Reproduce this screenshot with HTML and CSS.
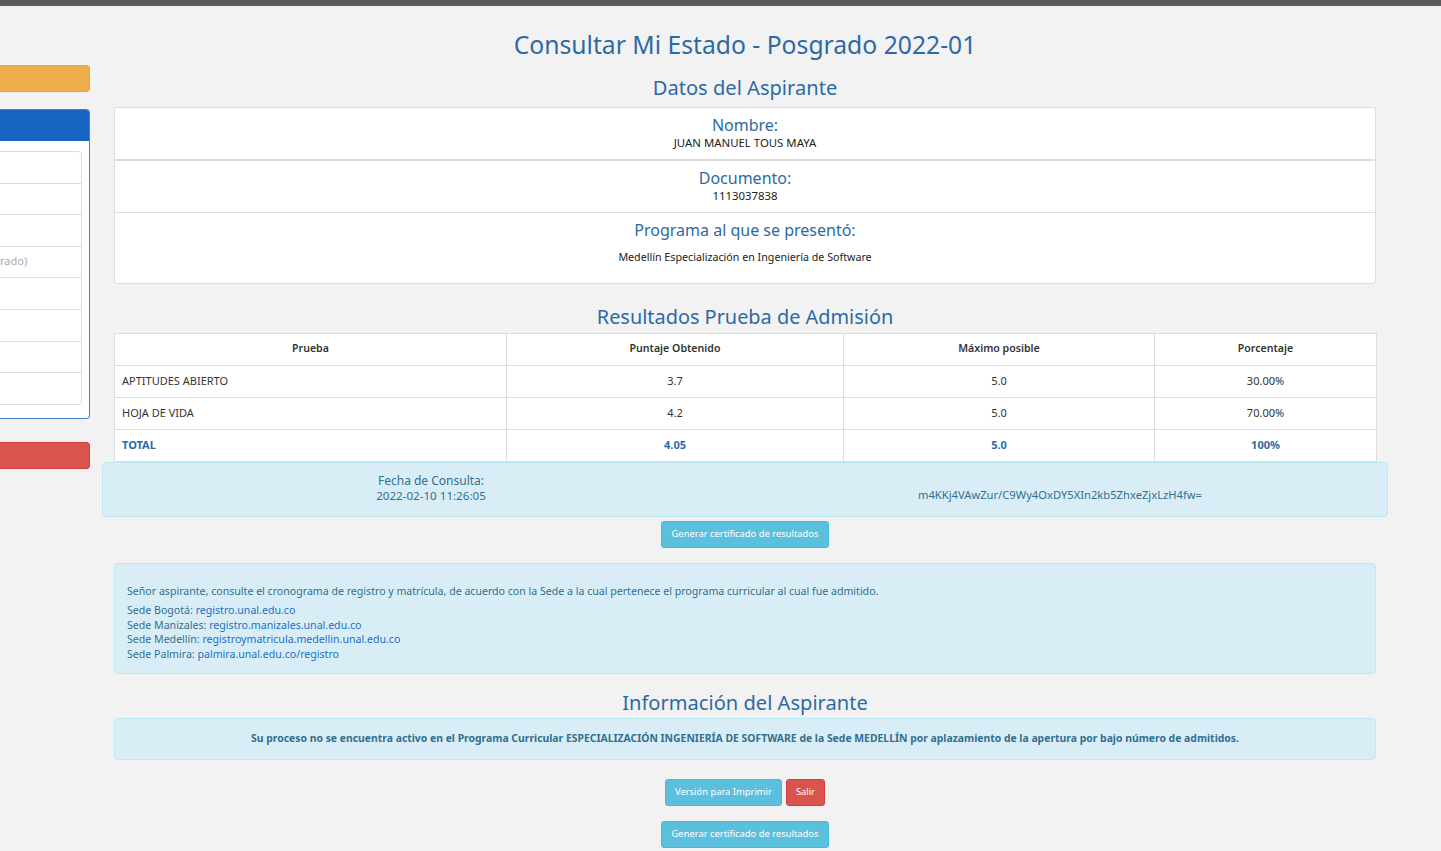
FILE: index.html
```html
<!DOCTYPE html>
<html lang="es">
<head>
<meta charset="utf-8">
<title>Consultar Mi Estado - Posgrado 2022-01</title>
<link rel="stylesheet" href="styles.css">
</head>
<body>
<div class="topbar"></div>
<div class="page">
  <aside class="sidebar">
    <div class="btn-side orange"></div>
    <div class="side-panel">
      <div class="side-head"></div>
      <div class="side-body">
        <ul class="side-list">
          <li></li><li></li><li></li><li class="muted">rado)</li><li></li><li></li><li></li><li></li>
        </ul>
      </div>
    </div>
    <div class="btn-side red"></div>
  </aside>
  <main class="main">
    <h1 class="title">Consultar Mi Estado - Posgrado 2022-01</h1>
    <h2 class="section">Datos del Aspirante</h2>
    <div class="card">
      <div class="card-row first">
        <div class="label">Nombre:</div>
        <div class="value">JUAN MANUEL TOUS MAYA</div>
      </div>
      <div class="card-row">
        <div class="label">Documento:</div>
        <div class="value">1113037838</div>
      </div>
      <div class="card-row prog">
        <div class="label">Programa al que se presentó:</div>
        <div class="value">Medellín Especialización en Ingeniería de Software</div>
      </div>
    </div>

    <h2 class="section results">Resultados Prueba de Admisión</h2>
    <table class="results-table">
      <colgroup><col class="c1"><col class="c2"><col class="c3"><col class="c4"></colgroup>
      <thead>
        <tr><th>Prueba</th><th>Puntaje Obtenido</th><th>Máximo posible</th><th>Porcentaje</th></tr>
      </thead>
      <tbody>
        <tr><td>APTITUDES ABIERTO</td><td>3.7</td><td>5.0</td><td>30.00%</td></tr>
        <tr><td>HOJA DE VIDA</td><td>4.2</td><td>5.0</td><td>70.00%</td></tr>
        <tr class="total"><td>TOTAL</td><td>4.05</td><td>5.0</td><td>100%</td></tr>
      </tbody>
    </table>

    <div class="alert fecha">
      <div class="fecha-col">
        <div class="fecha-label">Fecha de Consulta:</div>
        <div class="fecha-date">2022-02-10 11:26:05</div>
      </div>
      <div class="fecha-col hash">m4KKj4VAwZur/C9Wy4OxDY5XIn2kb5ZhxeZjxLzH4fw=</div>
    </div>
    <div class="btn-row"><a class="btn info">Generar certificado de resultados</a></div>

    <div class="alert sedes">
      <p class="intro">Señor aspirante, consulte el cronograma de registro y matrícula, de acuerdo con la Sede a la cual pertenece el programa curricular al cual fue admitido.</p>
      <p class="links">Sede Bogotá: <a>registro.unal.edu.co</a><br>
      Sede Manizales: <a>registro.manizales.unal.edu.co</a><br>
      Sede Medellín: <a>registroymatricula.medellin.unal.edu.co</a><br>
      Sede Palmira: <a>palmira.unal.edu.co/registro</a></p>
    </div>

    <h2 class="section info-title">Información del Aspirante</h2>
    <div class="alert estado">Su proceso no se encuentra activo en el Programa Curricular ESPECIALIZACIÓN INGENIERÍA DE SOFTWARE de la Sede MEDELLÍN por aplazamiento de la apertura por bajo número de admitidos.</div>

    <div class="btn-row actions"><a class="btn info">Versión para Imprimir</a><a class="btn danger">Salir</a></div>
    <div class="btn-row last"><a class="btn info">Generar certificado de resultados</a></div>
  </main>
</div>
</body>
</html>
```
FILE: styles.css
```css
* { box-sizing: border-box; }
html, body { margin: 0; padding: 0; }
body {
  background: #f2f2f2;
  font-family: "Noto Sans", "Open Sans", sans-serif;
  font-stretch: semi-condensed;
  color: #333;
  height: 851px;
  overflow: hidden;
}
.topbar { height: 6px; background: #5b5b5b; }
.page { display: flex; gap: 12px; }

.sidebar { width: 90px; flex: none; padding-top: 59px; }
.btn-side { height: 27px; border-radius: 0 4px 4px 0; }
.btn-side.orange { background: #f0ad4e; border: 1px solid #eea236; border-left: 0; }
.btn-side.red { background: #d9534f; border: 1px solid #d43f3a; border-left: 0; margin-top: 23px; }
.side-panel { margin-top: 17px; border: 1px solid #3b82cf; border-left: 0; border-radius: 0 4px 4px 0; background: #fff; height: 310px; overflow: hidden; }
.side-head { height: 31px; background: #1565c0; }
.side-body { padding: 10px 7px 0 0; }
.side-list { list-style: none; margin: 0; padding: 0; border: 1px solid #ddd; border-left: 0; border-radius: 0 4px 4px 0; }
.side-list li { height: 31.6px; border-top: 1px solid #ddd; font-size: 11px; color: #aaa; text-align: right; padding-right: 57px; line-height: 27px; }
.side-list li:first-child { border-top: 0; height: 30.6px; }

.main { width: 1286px; flex: none; padding: 0 12px; }
.title { margin: 23px 0 0; font-weight: 400; font-size: 24.7px; line-height: 32px; color: #2d6aa5; text-align: center; }
.section { margin: 14px 0 6px; font-weight: 400; font-size: 20.1px; line-height: 26px; color: #2d6aa5; text-align: center; }

.card { background: #fff; border: 1px solid #ddd; border-radius: 3px; }
.card-row { text-align: center; border-top: 1px solid #ddd; height: 52px; padding-top: 8px; }
.card-row.first { border-top: 0; height: 52px; border-bottom: 1px solid #ddd; }
.card-row.prog { height: 71px; }
.label { font-size: 16px; line-height: 18px; color: #2d6aa5; }
.value { font-size: 11.4px; line-height: 14px; color: #222; margin-top: 2px; }
.card-row.prog .value { margin-top: 11px; font-size: 10.7px; }

.section.results { margin-top: 20px; margin-bottom: 3px; font-size: 19.9px; }
.results-table { width: 100%; border-collapse: collapse; background: #fff; table-layout: fixed; font-size: 11px; }
.c1 { width: 392px; } .c2 { width: 337px; } .c3 { width: 311px; } .c4 { width: 222px; }
.results-table th, .results-table td { border: 1px solid #ddd; height: 32px; padding: 0 7px 3px; text-align: center; color: #333; }
.results-table th { font-weight: 600; font-size: 10.6px; }
.results-table td:first-child { text-align: left; }
.results-table tr.total td { color: #2d6aa5; font-weight: 700; }

.alert { background: #d9edf7; border: 1px solid #bce8f1; border-radius: 4px; color: #31708f; font-size: 11px; }
.fecha { margin: 0 -12px; height: 55px; display: grid; grid-template-columns: 656px 1fr; align-items: center; text-align: center; font-size: 11px; padding-bottom: 2px; }
.fecha-label { font-size: 12px; line-height: 15px; }
.fecha-date { font-size: 11.6px; line-height: 16px; }
.fecha-col.hash { padding-top: 11px; padding-right: 26px; font-size: 11.2px; }

.btn-row { display: flex; justify-content: center; gap: 4px; margin-top: 4px; }
.btn { display: inline-block; height: 27px; padding: 0 10px; line-height: 24px; font-size: 9.4px; color: #fff; border-radius: 3px; border: 1px solid transparent; }
.btn.info { background: #5bc0de; border-color: #46b8da; }
.btn.danger { background: #d9534f; border-color: #d43f3a; }
.actions .btn { padding: 0 9px; }

.sedes { margin-top: 15px; height: 111px; padding: 20px 12px 0; font-size: 10.6px; }
.sedes p { margin: 0; }
.sedes .intro { line-height: 15px; margin-bottom: 4px; }
.sedes .links { line-height: 14.5px; }
.sedes a { color: #1a6fc8; }

.section.info-title { margin-top: 16px; margin-bottom: 2px; }
.estado { height: 42px; line-height: 38px; text-align: center; font-weight: 700; font-size: 10.4px; }
.btn-row.actions { margin-top: 19px; }
.btn-row.last { margin-top: 15px; }
```
